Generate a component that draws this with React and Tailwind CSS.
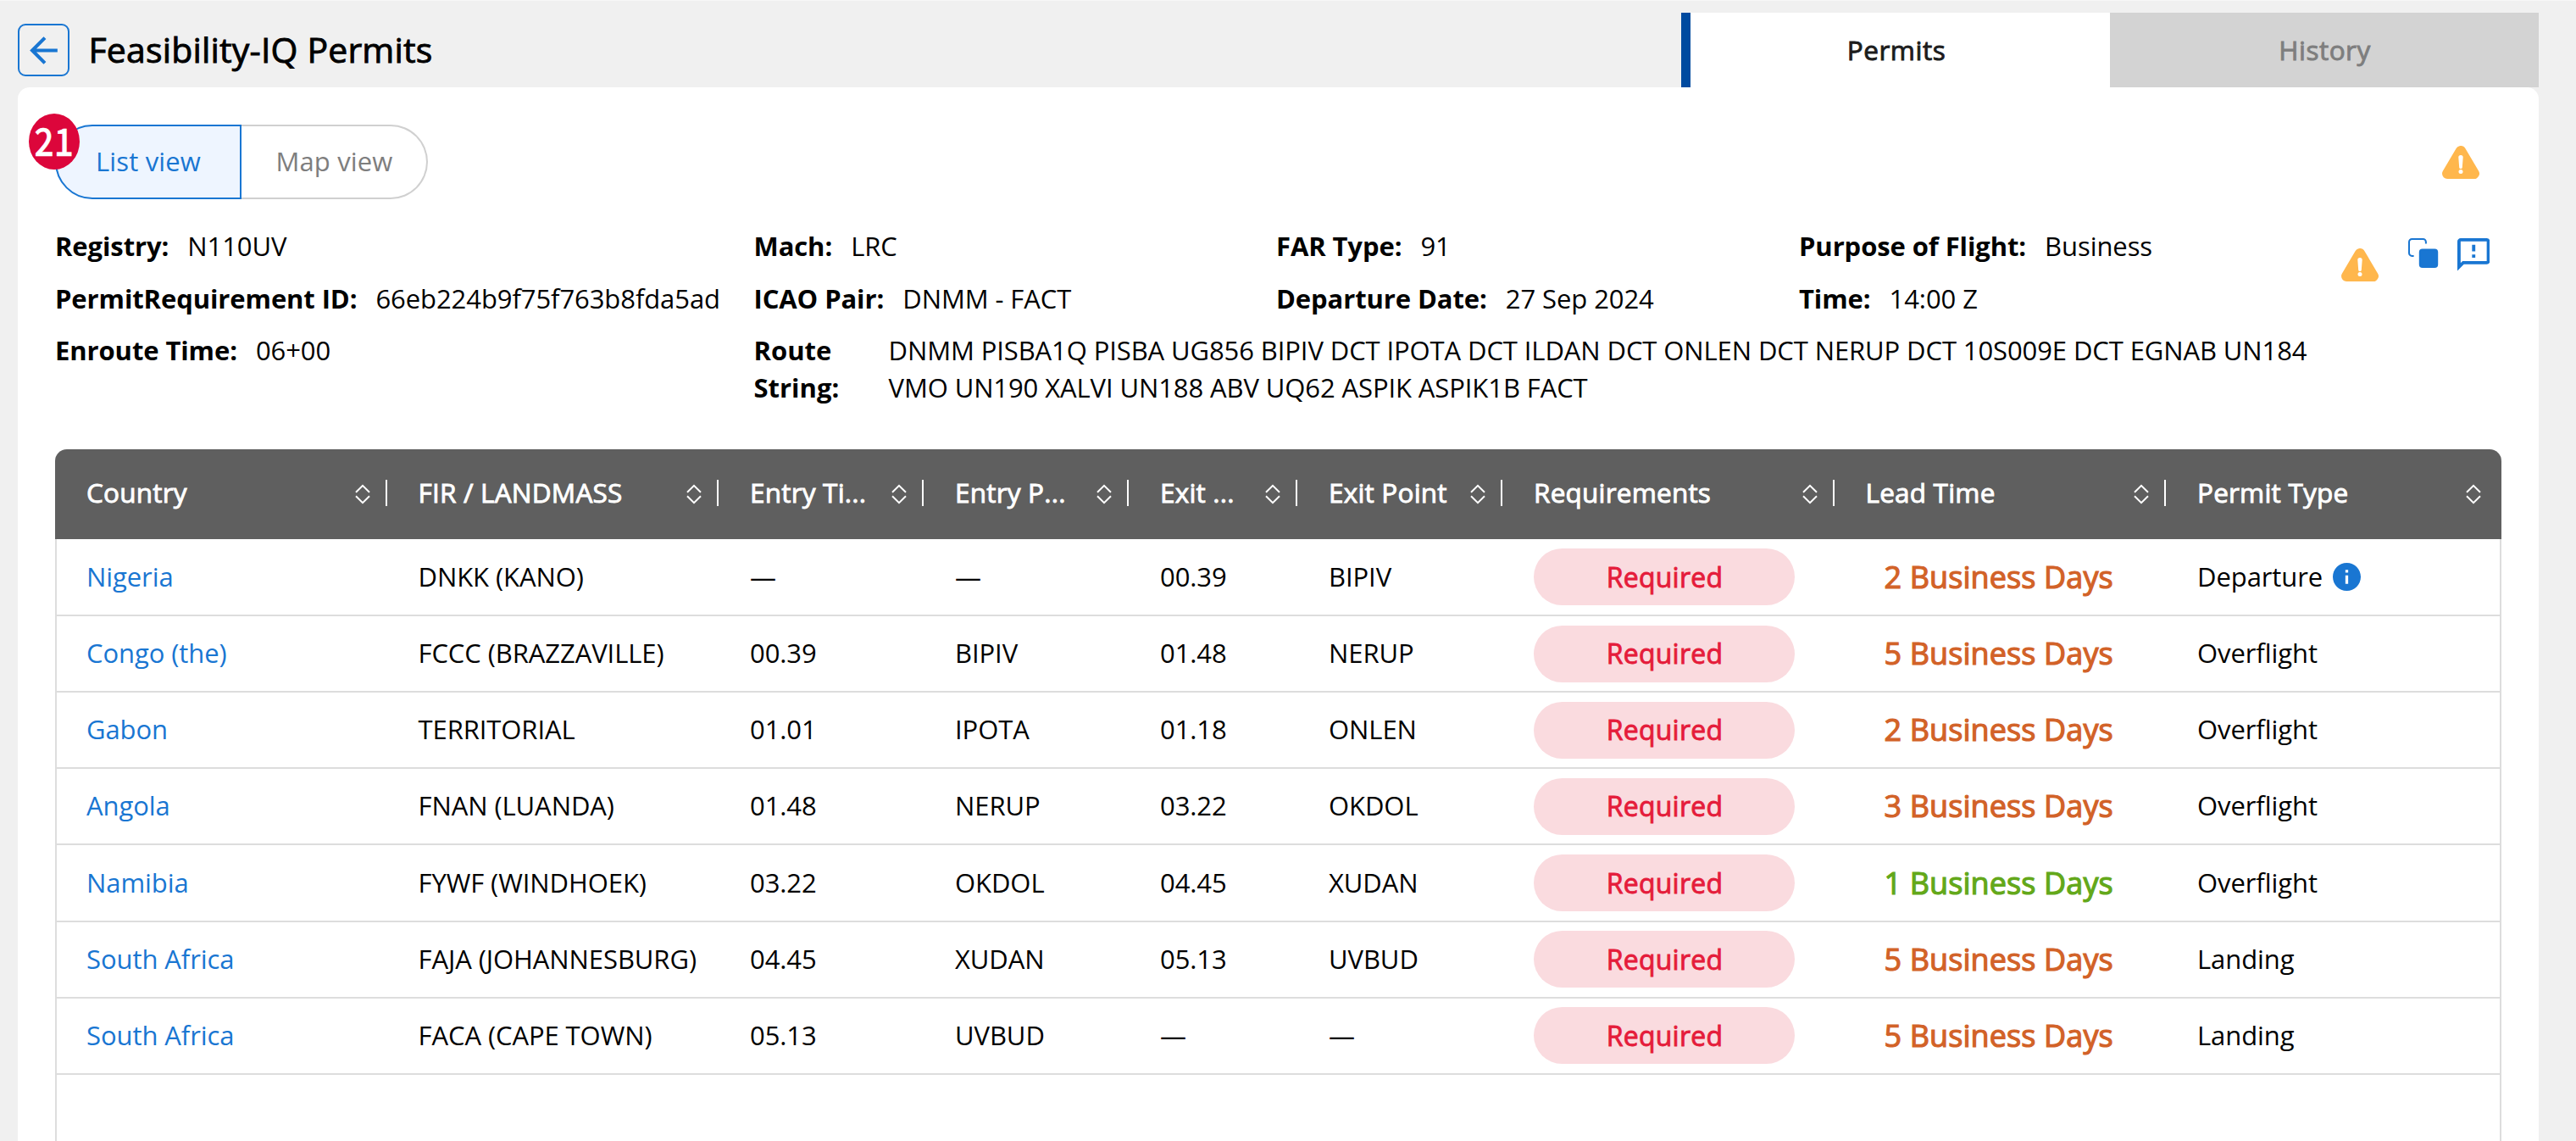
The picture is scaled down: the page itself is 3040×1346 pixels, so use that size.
import React from 'react';

const columns = [
  'Country',
  'FIR / LANDMASS',
  'Entry Ti...',
  'Entry P...',
  'Exit ...',
  'Exit Point',
  'Requirements',
  'Lead Time',
  'Permit Type',
];

const permits = [
  { country: 'Nigeria', fir: 'DNKK (KANO)', entryTime: '—', entryPoint: '—', exitTime: '00.39', exitPoint: 'BIPIV', lead: 2, type: 'Departure', info: true },
  { country: 'Congo (the)', fir: 'FCCC (BRAZZAVILLE)', entryTime: '00.39', entryPoint: 'BIPIV', exitTime: '01.48', exitPoint: 'NERUP', lead: 5, type: 'Overflight' },
  { country: 'Gabon', fir: 'TERRITORIAL', entryTime: '01.01', entryPoint: 'IPOTA', exitTime: '01.18', exitPoint: 'ONLEN', lead: 2, type: 'Overflight' },
  { country: 'Angola', fir: 'FNAN (LUANDA)', entryTime: '01.48', entryPoint: 'NERUP', exitTime: '03.22', exitPoint: 'OKDOL', lead: 3, type: 'Overflight' },
  { country: 'Namibia', fir: 'FYWF (WINDHOEK)', entryTime: '03.22', entryPoint: 'OKDOL', exitTime: '04.45', exitPoint: 'XUDAN', lead: 1, type: 'Overflight' },
  { country: 'South Africa', fir: 'FAJA (JOHANNESBURG)', entryTime: '04.45', entryPoint: 'XUDAN', exitTime: '05.13', exitPoint: 'UVBUD', lead: 5, type: 'Landing' },
  { country: 'South Africa', fir: 'FACA (CAPE TOWN)', entryTime: '05.13', entryPoint: 'UVBUD', exitTime: '—', exitPoint: '—', lead: 5, type: 'Landing' },
];

const gridColumns = 'grid grid-cols-[391.5px_391.5px_242px_242px_199px_242px_391.5px_391.5px_1fr]';

const medium = '[-webkit-text-stroke:0.9px_currentColor]';

const WarningIcon = () => (
  <svg className="h-[39px] w-[44px] shrink-0" viewBox="0 0 44 39">
    <path d="M22 6.2 37.8 32.8H6.2Z" fill="#ffb74d" stroke="#ffb74d" strokeWidth="12.4" strokeLinejoin="round" />
    <path d="M19.3 13.6a2.7 2.5 0 0 1 5.4 0L23.8 25.4a1.8 1.7 0 0 1-3.6 0Z" fill="#fff" />
    <circle cx="22" cy="30.4" r="2.5" fill="#fff" />
  </svg>
);

const CopyIcon = () => (
  <svg className="h-[36px] w-[36px] shrink-0" viewBox="0 0 36 36">
    <path d="M6.6 20.9H4.4a3.4 3.4 0 0 1-3.4-3.4V4.4A3.4 3.4 0 0 1 4.4 1h13.1a3.4 3.4 0 0 1 3.4 3.4v2.1" fill="none" stroke="#1976d2" strokeWidth="2" />
    <rect x="12.8" y="12.6" width="22.4" height="22.4" rx="4" fill="#1976d2" />
  </svg>
);

const FeedbackIcon = () => (
  <svg className="h-[38.5px] w-[38.5px] shrink-0" viewBox="2 2 20 20" fill="#1976d2">
    <path d="M20 2H4c-1.1 0-1.99.9-1.99 2L2 22l4-4h14c1.1 0 2-.9 2-2V4c0-1.1-.9-2-2-2zm0 14H5.17L4 17.17V4h16v12zM11 12h2v2h-2zm0-6h2v4h-2z" />
  </svg>
);

const InfoIcon = () => (
  <svg className="h-[33px] w-[33px] shrink-0" viewBox="2 2 20 20" fill="#1976d2">
    <path d="M12 2C6.48 2 2 6.48 2 12s4.48 10 10 10 10-4.48 10-10S17.52 2 12 2zm1 15h-2v-6h2v6zm0-8h-2V7h2v2z" />
  </svg>
);

const SortIcon = () => (
  <svg className="h-[24px] w-[18px] shrink-0" viewBox="0 0 18 24" fill="none" stroke="#fff" strokeWidth="2">
    <path d="M1 9.8 9 1.8l8 8M1 14.2l8 8 8-8" />
  </svg>
);

const Field = ({ label, children }) => (
  <div className="flex gap-[22px] whitespace-nowrap">
    <span className="font-bold tracking-[-0.1px]">{label}:</span>
    <span className="tracking-[-0.08px]">{children}</span>
  </div>
);

const Header = () => (
  <header className="flex h-[103px] items-center border-t border-[#f7f7f7] pt-[14px] pr-[44px] pl-[21px]">
    <button className="flex h-[62px] w-[61px] items-center justify-center rounded-[9px] border-2 border-[#1976d2]">
      <svg className="h-[49px] w-[49px] shrink-0" viewBox="0 0 24 24" fill="#1976d2">
        <path d="M20 11H7.83l5.59-5.59L12 4l-8 8 8 8 1.41-1.41L7.83 13H20v-2z" />
      </svg>
    </button>
    <h1 className="ml-[22.5px] pb-[2px] text-[41px] leading-[56px] tracking-[0.17px] [-webkit-text-stroke:0.9px_currentColor]">
      Feasibility-IQ Permits
    </h1>
    <nav className={`ml-auto flex h-full text-[31.5px] tracking-[0.5px] ${medium}`}>
      <div className="flex w-[506px] items-center justify-center border-l-[11px] border-[#004a9f] bg-white pr-[9px] text-[#1c1c1c]">
        Permits
      </div>
      <div className="flex w-[506px] items-center justify-center bg-[#d3d3d3] pl-px text-[#7e7e7e]">History</div>
    </nav>
  </header>
);

const ViewToggle = () => (
  <div className="relative flex h-[88px] tracking-[0.15px]">
    <button className="flex w-[220px] items-center justify-center rounded-l-[44px] border-2 border-[#1976d2] bg-[#eef5ff] pb-[2px] text-[#1976d2]">
      List view
    </button>
    <button className="flex w-[220px] items-center justify-center rounded-r-[44px] border-2 border-l-0 border-[#d0d0d0] pb-[2px] pl-px text-[#7e7e7e]">
      Map view
    </button>
    <div className="absolute -top-[13px] -left-[31px] flex h-[66px] w-[60px] items-center justify-center rounded-[50%] bg-[#dc063b]">
      <span className="scale-x-90 pb-[6px] text-[45px] leading-none font-medium text-white [-webkit-text-stroke:0.4px_currentColor] font-['Noto_Sans_CJK_SC',sans-serif]">21</span>
    </div>
  </div>
);

const FlightDetails = () => (
  <section className="mt-[33px] flex h-[211px] justify-between">
    <div className="grid grid-cols-[824.5px_616.5px_617px_620px] content-start gap-y-[17.5px] leading-[44px]">
      <Field label="Registry">N110UV</Field>
      <Field label="Mach">LRC</Field>
      <Field label="FAR Type">91</Field>
      <Field label="Purpose of Flight">Business</Field>
      <Field label="PermitRequirement ID">66eb224b9f75f763b8fda5ad</Field>
      <Field label="ICAO Pair">DNMM - FACT</Field>
      <Field label="Departure Date">27 Sep 2024</Field>
      <Field label="Time">14:00 Z</Field>
      <Field label="Enroute Time">06+00</Field>
      <div className="col-span-3 flex gap-[22px]">
        <span className="w-[137px] shrink-0 font-bold">Route String:</span>
        <span className="w-[1690px] shrink-0 tracking-[-0.1px]">
          DNMM PISBA1Q PISBA UG856 BIPIV DCT IPOTA DCT ILDAN DCT ONLEN DCT NERUP DCT 10S009E DCT EGNAB UN184 VMO UN190 XALVI UN188 ABV UQ62 ASPIK ASPIK1B FACT
        </span>
      </div>
    </div>
    <div className="mr-[14px] flex items-start pt-[13px]">
      <div className="mt-[12px] mr-[35px]">
        <WarningIcon />
      </div>
      <div className="mr-[22px]">
        <CopyIcon />
      </div>
      <FeedbackIcon />
    </div>
  </section>
);

const PermitTable = () => (
  <section className="mt-[51px] flex flex-1 flex-col">
    <div className={`h-[106px] shrink-0 rounded-t-[14px] bg-[#5f5f5f] text-[31.5px] tracking-[0.2px] text-white ${gridColumns} ${medium}`}>
      {columns.map((name, i) => (
        <div key={name} className="flex items-center pl-[37px]">
          <span className="pb-[4px] whitespace-nowrap">{name}</span>
          <div className="ml-auto flex items-center">
            <SortIcon />
            {i < columns.length - 1 ? (
              <div className="mb-[3px] ml-[18px] h-[31px] w-[2px] bg-white" />
            ) : (
              <div className="w-[24px]" />
            )}
          </div>
        </div>
      ))}
    </div>
    <div className="flex-1 border-x-2 border-[#ddd]">
      {permits.map((row) => (
        <div
          key={row.fir}
          className={`h-[90.17px] items-center border-b-2 border-[#ddd] first:h-[91px] ${gridColumns} -ml-[2px] tracking-[-0.08px] *:pl-[37px]`}
        >
          <div className="pb-[2px] text-[#1976d2]">{row.country}</div>
          <div className="pb-[2px] whitespace-nowrap">{row.fir}</div>
          <div className="pb-[2px]">{row.entryTime}</div>
          <div className="pb-[2px]">{row.entryPoint}</div>
          <div className="pb-[2px]">{row.exitTime}</div>
          <div className="pb-[2px]">{row.exitPoint}</div>
          <div>
            <div className={`flex h-[67px] w-[308px] items-center justify-center rounded-full bg-[#fadbdf] pl-px text-[32px] tracking-[0.25px] text-[#e51c3b] ${medium}`}>
              Required
            </div>
          </div>
          <div className={row.lead === 1 ? 'text-[#63a81a]' : 'text-[#d26228]'}>
            <span className="ml-[22px] text-[36px] leading-[48px] tracking-[0.1px] [-webkit-text-stroke:1.2px_currentColor]">
              {row.lead} Business Days
            </span>
          </div>
          <div className="flex items-center gap-[12px]">
            <span className="pb-[2px]">{row.type}</span>
            {row.info && <InfoIcon />}
          </div>
        </div>
      ))}
    </div>
  </section>
);

const App = () => (
  <div className="flex h-[1346px] w-[3040px] flex-col overflow-hidden bg-[#f0f0f0] text-[31px] leading-[44px] text-black font-['Open_Sans','Noto_Sans',sans-serif]">
    <Header />
    <main className="mr-[44px] ml-[21px] flex flex-1 flex-col rounded-t-[14px] bg-white px-[44px] pt-[44px]">
      <div className="flex items-center justify-between pr-[26px]">
        <ViewToggle />
        <WarningIcon />
      </div>
      <FlightDetails />
      <PermitTable />
    </main>
  </div>
);

export default App;
